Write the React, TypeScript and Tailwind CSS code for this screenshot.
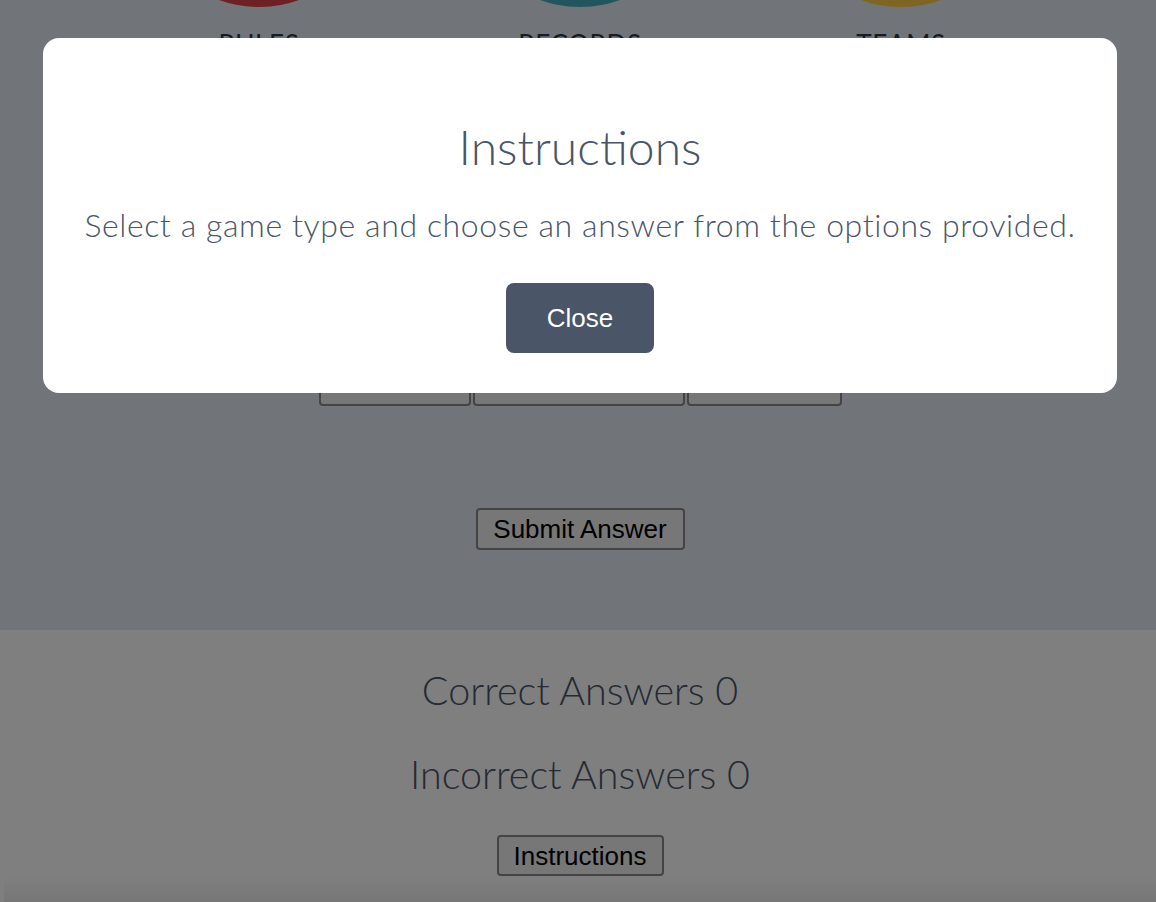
import React from 'react';

const navItems = [
  { label: 'HISTORY', color: 'bg-[#4a8fd6]' },
  { label: 'RULES', color: 'bg-[#de4048]' },
  { label: 'RECORDS', color: 'bg-[#44aabc]' },
  { label: 'TEAMS', color: 'bg-[#ffca44]' },
  { label: 'CONTACT', color: 'bg-[#7ac174]' },
];

const answers = [
  { text: 'Boston', width: 'w-[152px]' },
  { text: 'Green Bay Packers', width: 'w-[212px]' },
  { text: 'Denver', width: 'w-[155px]' },
];

const raleway = { fontFamily: 'Lato, "Open Sans", sans-serif' };
const system = { fontFamily: '"Liberation Sans", Arial, sans-serif' };

export default function App() {
  return (
    <div className="relative h-[902px] overflow-hidden" style={raleway}>
      {/* top area */}
      <div className="h-[630px] bg-[#e2e8f0] overflow-hidden">
        <div className="flex justify-center mt-[-229px] pl-[4px]">
          {navItems.map(item => (
            <div key={item.label} className="w-[321px] shrink-0 flex flex-col items-center">
              <div className={`w-[236px] h-[236px] rounded-full ${item.color}`} />
              <span className="mt-[22px] text-[26px] leading-[30px] tracking-wide text-[#2d3748] font-normal">
                {item.label}
              </span>
            </div>
          ))}
        </div>

        <div className="mt-[299px] flex justify-center items-end gap-[2px] pl-[4px]" style={system}>
          {answers.map(a => (
            <button
              key={a.text}
              className={`${a.width} h-[48px] pb-[10px] border-2 border-[#888] rounded bg-[#efefef] text-[22px] leading-none text-black whitespace-nowrap overflow-hidden`}
            >
              {a.text}
            </button>
          ))}
        </div>

        <div className="mt-[102px] flex justify-center pl-[4px]">
          <button
            className="w-[209px] h-[42px] border-2 border-[#888] rounded bg-[#efefef] text-[26px] leading-none text-black"
            style={system}
          >
            Submit Answer
          </button>
        </div>
      </div>

      {/* score area */}
      <div className="h-[272px] bg-white flex flex-col items-center pl-[4px]">
        <p className="mt-[36px] text-[39.5px] leading-[48px] font-light text-[#4a5568]">Correct Answers 0</p>
        <p className="mt-[36px] text-[39.5px] leading-[48px] font-light text-[#4a5568]">Incorrect Answers 0</p>
        <button
          className="mt-[37px] w-[167px] h-[42px] border-2 border-[#888] rounded bg-[#efefef] text-[26px] leading-none text-black"
          style={system}
        >
          Instructions
        </button>
        <div className="mt-auto w-full h-[26px] bg-gradient-to-b from-white to-[#ededed]" />
      </div>

      {/* modal */}
      <div className="absolute inset-0 bg-black/50 flex justify-center items-start pt-[38px] pl-[4px]">
        <div className="w-[1074px] h-[355px] bg-white rounded-2xl flex flex-col items-center">
          <h1 className="mt-[80px] text-[48px] leading-[58px] font-light text-[#4a5568]">Instructions</h1>
          <p className="mt-[31px] text-[32px] leading-[36px] tracking-[0.6px] font-light text-[#4a5568]">
            Select a game type and choose an answer from the options provided.
          </p>
          <button
            className="mt-[40px] w-[148px] h-[70px] rounded-lg bg-[#4a5568] text-white text-[26px]"
            style={system}
          >
            Close
          </button>
        </div>
      </div>
    </div>
  );
}
